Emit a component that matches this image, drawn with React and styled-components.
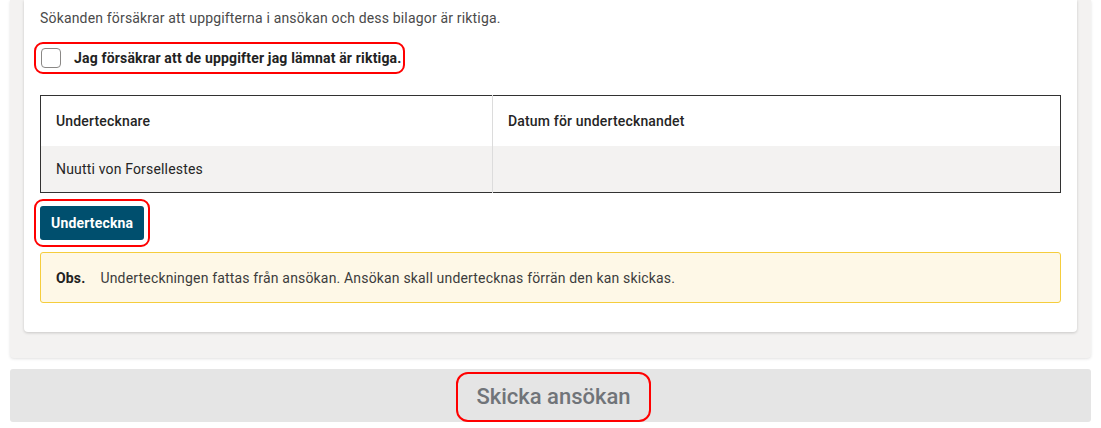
import styled, { createGlobalStyle } from "styled-components";

const GlobalStyle = createGlobalStyle`
  body {
    margin: 0;
    background: #ffffff;
    font-family: Roboto, "Liberation Sans", Arial, sans-serif;
    letter-spacing: 0.17px;
    color: #222222;
  }
`;

const Page = styled.div`
  width: 1081px;
  padding-left: 10px;
`;

const Panel = styled.section`
  background: #f3f2f1;
  padding: 0 14px 26px;
  border-radius: 0 0 4px 4px;
  box-shadow: 0 1px 3px rgba(0, 0, 0, 0.12);
`;

const Card = styled.div`
  background: #ffffff;
  padding: 8px 16px 29px;
  border-radius: 0 0 4px 4px;
  box-shadow: 0 1px 3px rgba(0, 0, 0, 0.18);
  display: flex;
  flex-direction: column;
  align-items: flex-start;
`;

const Intro = styled.p`
  margin: 0;
  font-size: 14px;
  line-height: 20px;
  color: #4a4a4a;
`;

const Marked = styled.div`
  display: inline-flex;
  align-items: center;
  border: 2px solid #ff0000;
  border-radius: ${(p) => p.radius || 8}px;
  padding: ${(p) => p.pad || "4px"};
  margin: ${(p) => p.margin || "0"};
`;

const CheckRow = styled.label`
  display: flex;
  align-items: center;
  gap: 13px;
  cursor: pointer;
`;

const Box = styled.span`
  width: 18px;
  height: 18px;
  border: 1px solid #8a8886;
  border-radius: 4px;
  background: #ffffff;
`;

const CheckLabel = styled.span`
  font-size: 14px;
  font-weight: 700;
  color: #222222;
`;

const Table = styled.table`
  width: 1021px;
  margin-top: 21px;
  border: 1px solid #323232;
  border-collapse: collapse;
  table-layout: fixed;
  font-size: 14px;
`;

const Row = styled.tr`
  background: ${(p) => (p.shaded ? "#f3f2f1" : "#ffffff")};
`;

const Cell = styled.td`
  height: ${(p) => (p.head ? 50 : 46)}px;
  padding: 0 15px;
  width: ${(p) => p.width || "auto"};
  font-weight: ${(p) => (p.head ? 500 : 400)};
  color: #252525;
  & + & {
    border-left: 1px solid #dcdcdc;
  }
`;

const SignButton = styled.button`
  height: 34px;
  padding: 0 11px;
  border: none;
  border-radius: 3px;
  background: #004f6e;
  color: #ffffff;
  font-family: inherit;
  letter-spacing: inherit;
  font-size: 14px;
  font-weight: 700;
`;

const Notice = styled.div`
  box-sizing: border-box;
  width: 1021px;
  height: 51px;
  margin-top: 5px;
  padding: 0 15px;
  display: flex;
  align-items: center;
  gap: 15px;
  background: #fef8e7;
  border: 1px solid #f5cd3d;
  border-radius: 3px;
  font-size: 14px;
  color: #3c3c3c;
`;

const NoticeTag = styled.strong`
  font-weight: 700;
  color: #222222;
`;

const SubmitBar = styled.div`
  margin-top: 11px;
  height: 53px;
  padding: 3px 0 0 6px;
  box-sizing: border-box;
  display: flex;
  justify-content: center;
  align-items: flex-start;
  background: #e5e5e5;
  border-radius: 3px;
`;

const SubmitText = styled.span`
  font-size: 22px;
  line-height: 26px;
  font-weight: 500;
  letter-spacing: 0;
  color: #707479;
`;

export default function App() {
  return (
    <>
      <GlobalStyle />
      <Page>
        <Panel>
          <Card>
            <Intro>
              Sökanden försäkrar att uppgifterna i ansökan och dess bilagor är riktiga.
            </Intro>
            <Marked margin="14px 0 0 -6px" pad="4px 2px 4px 5px" radius={9}>
              <CheckRow>
                <Box />
                <CheckLabel>Jag försäkrar att de uppgifter jag lämnat är riktiga.</CheckLabel>
              </CheckRow>
            </Marked>
            <Table>
              <tbody>
                <Row>
                  <Cell head width="421px">Undertecknare</Cell>
                  <Cell head>Datum för undertecknandet</Cell>
                </Row>
                <Row shaded>
                  <Cell>Nuutti von Forsellestes</Cell>
                  <Cell />
                </Row>
              </tbody>
            </Table>
            <Marked margin="6px 0 0 -6px" pad="5px 4px" radius={9}>
              <SignButton>Underteckna</SignButton>
            </Marked>
            <Notice>
              <NoticeTag>Obs.</NoticeTag>
              Underteckningen fattas från ansökan. Ansökan skall undertecknas förrän den kan skickas.
            </Notice>
          </Card>
        </Panel>
        <SubmitBar>
          <Marked pad="10px 18px" radius={12}>
            <SubmitText>Skicka ansökan</SubmitText>
          </Marked>
        </SubmitBar>
      </Page>
    </>
  );
}
